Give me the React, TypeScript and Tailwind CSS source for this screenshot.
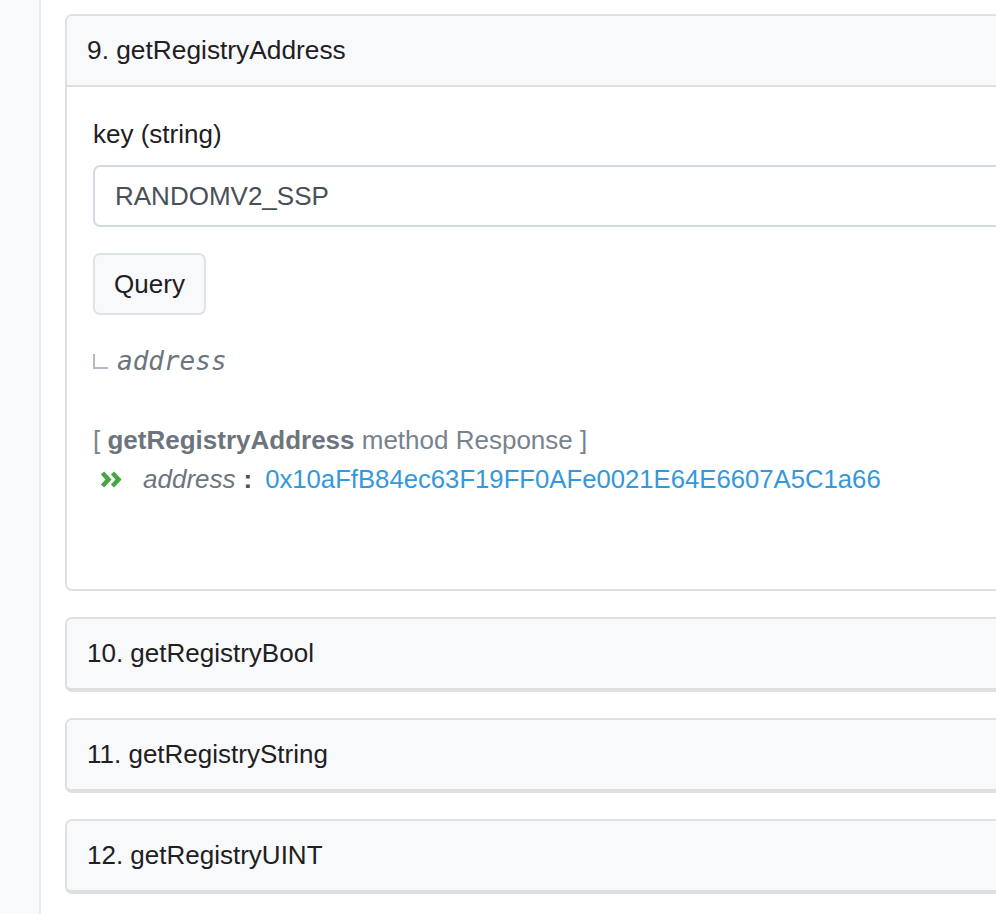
const collapsed = ['10. getRegistryBool', '11. getRegistryString', '12. getRegistryUINT'];

function DoubleAngle() {
  return (
    <svg width="22" height="17" viewBox="0 0 22 17" className="shrink-0">
      <path d="M2.5 2 L8.5 8.5 L2.5 15" fill="none" stroke="#47a447" strokeWidth="4.5" />
      <path d="M12.5 2 L18.5 8.5 L12.5 15" fill="none" stroke="#47a447" strokeWidth="4.5" />
    </svg>
  );
}

export default function App() {
  return (
    <div className="flex min-h-screen overflow-hidden bg-white font-['Liberation_Sans',Arial,sans-serif] text-[26px]">
      <div className="w-[41px] shrink-0 bg-[#f8f9fb] border-r-2 border-[#e9ebf2]" />
      <div className="flex-1 pl-[24px] pt-[14px] -mr-[20px] flex flex-col gap-[26px]">
        {/* expanded card */}
        <div className="border-2 border-r-0 border-[#e0e0e2] rounded-l-[7px] overflow-hidden">
          <div className="h-[71px] bg-[#f8f9fa] border-b-2 border-[#dedfe1] flex items-center px-[20px] text-[#1e2022] text-[26.3px]">
            9. getRegistryAddress
          </div>
          <div className="pl-[26px] pt-[28px] pb-[90px]">
            <div className="leading-[39px] text-[#1e2022]">key (string)</div>
            <div className="mt-[11px] h-[62px] border-2 border-r-0 border-[#d5dae2] rounded-l-[7px] flex items-center px-[20px] text-[#495057]">
              RANDOMV2_SSP
            </div>
            <button className="mt-[26px] h-[62px] w-[113px] border-2 border-[#dfe3e8] bg-[#f8f9fa] rounded-[7px] text-[#1e2022]">
              Query
            </button>
            <div className="mt-[27px] flex items-center leading-[39px]">
              <span className="w-[15px] h-[15px] border-l-2 border-b-2 border-[#b3b9c4] mr-[9px]" />
              <span className="italic font-['DejaVu_Sans_Mono',monospace] text-[#6c757d]">address</span>
            </div>
            <div className="mt-[40px] leading-[39px] text-[#77838f]">
              [ <span className="font-bold text-[#6c757d]">getRegistryAddress</span> method Response ]
            </div>
            <div className="flex items-center leading-[39px] pl-[7px]">
              <DoubleAngle />
              <span className="ml-[21px] italic text-[#6c757d]">address</span>
              <span className="ml-[8px] font-bold text-[#4a4f55]">:</span>
              <span className="ml-[13px] text-[#3498db] text-[25.7px]">0x10aFfB84ec63F19FF0AFe0021E64E6607A5C1a66</span>
            </div>
          </div>
        </div>
        {collapsed.map((title) => (
          <div key={title} className="border-2 border-r-0 border-b-4 border-[#dedfe1] rounded-l-[7px] overflow-hidden">
            <div className="h-[69px] bg-[#f8f9fa] flex items-center px-[20px] text-[#1e2022]">{title}</div>
          </div>
        ))}
      </div>
    </div>
  );
}
